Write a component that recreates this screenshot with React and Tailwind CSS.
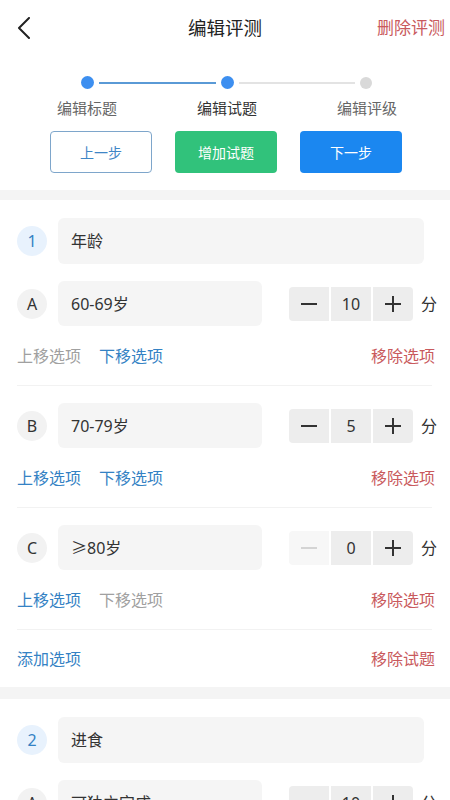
import React from "react";

const questions = [
  {
    no: 1,
    title: "年龄",
    options: [
      { key: "A", text: "60-69岁", score: 10 },
      { key: "B", text: "70-79岁", score: 5 },
      { key: "C", text: "≥80岁", score: 0 },
    ],
  },
  {
    no: 2,
    title: "进食",
    options: [
      { key: "A", text: "可独立完成", score: 10 },
      { key: "B", text: "需部分帮助", score: 5 },
      { key: "C", text: "需极大帮助", score: 0 },
    ],
  },
];

function Minus({ disabled }) {
  return (
    <svg width="18" height="18" viewBox="0 0 18 18">
      <line x1="1" y1="9" x2="17" y2="9" stroke={disabled ? "#d4d4d4" : "#333"} strokeWidth="2" />
    </svg>
  );
}

function Plus() {
  return (
    <svg width="18" height="18" viewBox="0 0 18 18">
      <line x1="1" y1="9" x2="17" y2="9" stroke="#333" strokeWidth="2" />
      <line x1="9" y1="1" x2="9" y2="17" stroke="#333" strokeWidth="2" />
    </svg>
  );
}

function Option({ opt, index, total }) {
  const first = index === 0;
  const last = index === total - 1;
  const minusDisabled = opt.score === 0;
  return (
    <div>
      <div className="flex items-center pl-[17px] pt-[17px]">
        <div className="w-[30px] h-[30px] rounded-full bg-[#f2f2f2] flex items-center justify-center text-[16px] text-[#333]">
          {opt.key}
        </div>
        <div className="ml-[11px] w-[204px] h-[45px] rounded-[6px] bg-[#f5f5f5] flex items-center pl-[13px] text-[16px] text-[#333]">
          {opt.text}
        </div>
        <div className="ml-[27px] flex h-[34px] gap-[2px]">
          <div className={"w-[40px] rounded-l-[4px] flex items-center justify-center " + (minusDisabled ? "bg-[#f7f7f7]" : "bg-[#ededed]")}>
            <Minus disabled={minusDisabled} />
          </div>
          <div className="w-[40px] bg-[#ededed] flex items-center justify-center text-[16px] text-[#333]">
            {opt.score}
          </div>
          <div className="w-[40px] rounded-r-[4px] bg-[#ededed] flex items-center justify-center">
            <Plus />
          </div>
        </div>
        <div className="ml-[8px] text-[16px] text-[#333]">分</div>
      </div>
      <div className="h-[59px] flex items-center justify-between pl-[17px] pr-[15px] text-[16px]">
        <div className="flex gap-[18px]">
          <span className={first ? "text-[#a0a0a0]" : "text-[#3482c4]"}>上移选项</span>
          <span className={last ? "text-[#a0a0a0]" : "text-[#3482c4]"}>下移选项</span>
        </div>
        <span className="text-[#c95a5d]">移除选项</span>
      </div>
      <div className="ml-[17px] mr-[18px] h-px bg-[#f2f2f2]" />
    </div>
  );
}

function Question({ q }) {
  return (
    <div>
      <div className="flex items-center pl-[17px] pr-[26px] pt-[18px]">
        <div className="w-[30px] h-[30px] rounded-full bg-[#e8f2fd] flex items-center justify-center text-[16px] text-[#3482c4]">
          {q.no}
        </div>
        <div className="ml-[11px] flex-1 h-[46px] rounded-[6px] bg-[#f5f5f5] flex items-center pl-[13px] text-[16px] text-[#333]">
          {q.title}
        </div>
      </div>
      {q.options.map((o, i) => (
        <Option key={o.key} opt={o} index={i} total={q.options.length} />
      ))}
      <div className="h-[57px] flex items-center justify-between pl-[17px] pr-[15px] text-[16px]">
        <span className="text-[#3482c4]">添加选项</span>
        <span className="text-[#c95a5d]">移除试题</span>
      </div>
      <div className="h-[12px] bg-[#f4f4f4]" />
    </div>
  );
}

export default function App() {
  return (
    <div className="w-full min-h-screen bg-white font-['Noto_Sans','Noto_Sans_CJK_SC',sans-serif]">
      <div className="relative h-[56px] flex items-center justify-center">
        <svg className="absolute left-[17px] top-[17px]" width="14" height="22" viewBox="0 0 14 22">
          <polyline points="12,1 2,11 12,21" fill="none" stroke="#222" strokeWidth="2" strokeLinecap="round" strokeLinejoin="round" />
        </svg>
        <span className="text-[18.5px] text-[#222]">编辑评测</span>
        <span className="absolute right-[5px] top-[16px] text-[17px] leading-[24px] text-[#c95a5d]">删除评测</span>
      </div>

      <div className="pt-[20px]">
        <div className="flex items-center pl-[81px] pr-[78px]">
          <div className="w-[13px] h-[13px] rounded-full bg-[#3d8ff0]" />
          <div className="flex-1 mx-[5px] h-[2px] bg-[#5a9ad6]" />
          <div className="w-[13px] h-[13px] rounded-full bg-[#3d8ff0]" />
          <div className="flex-1 mx-[5px] h-[2px] bg-[#e3e3e3]" />
          <div className="w-[12px] h-[12px] rounded-full bg-[#d9d9d9]" />
        </div>
        <div className="ml-[17px] w-[420px] grid grid-cols-3 mt-[9px] text-[15px] leading-[20px] text-center">
          <span className="text-[#666]">编辑标题</span>
          <span className="text-[#333]">编辑试题</span>
          <span className="text-[#666]">编辑评级</span>
        </div>
        <div className="flex gap-[23px] pl-[50px] mt-[13px]">
          <div className="w-[102px] h-[42px] rounded-[4px] border border-[#7ea6cb] flex items-center justify-center text-[14px] text-[#3f86c6]">
            上一步
          </div>
          <div className="w-[102px] h-[42px] rounded-[4px] bg-[#31c27b] flex items-center justify-center text-[14px] text-white">
            增加试题
          </div>
          <div className="w-[102px] h-[42px] rounded-[4px] bg-[#1b87f0] flex items-center justify-center text-[14px] text-white">
            下一步
          </div>
        </div>
      </div>
      <div className="mt-[17px] h-[10px] bg-[#f4f4f4]" />

      {questions.map((q) => (
        <Question key={q.no} q={q} />
      ))}
    </div>
  );
}
